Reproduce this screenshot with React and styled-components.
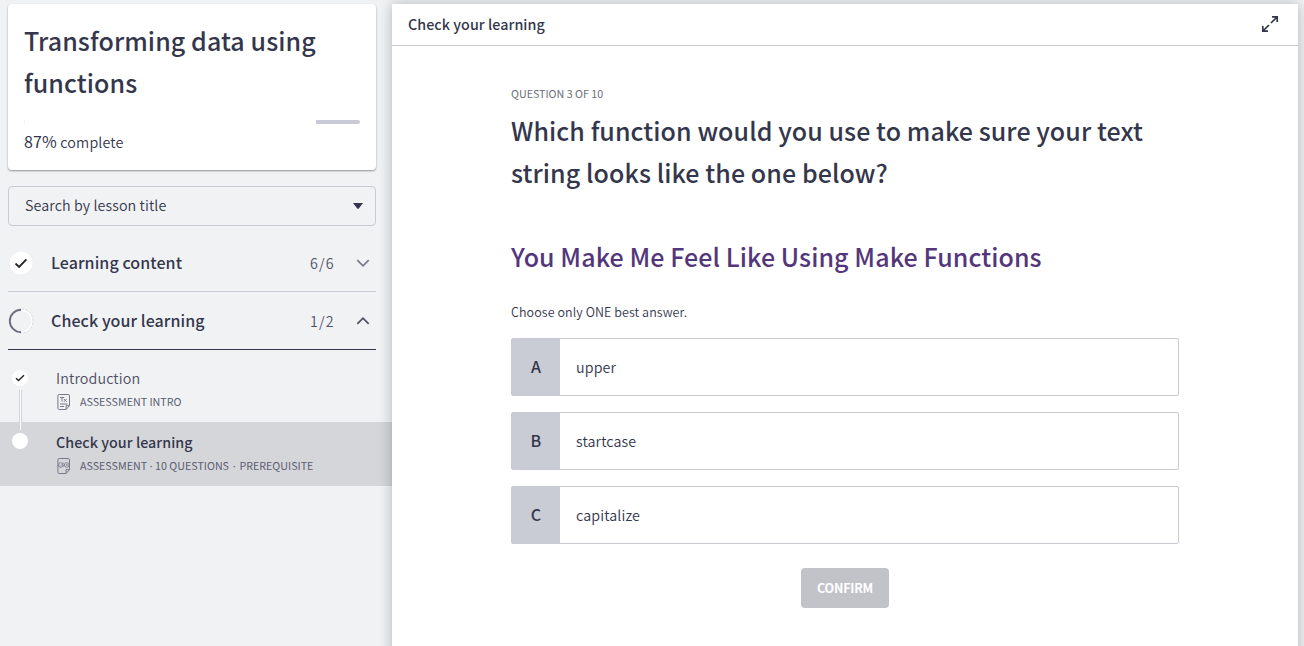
import React from "react";
import styled, { createGlobalStyle } from "styled-components";

const GlobalStyle = createGlobalStyle`
  * { box-sizing: border-box; }
  body {
    margin: 0;
    background: #f1f2f4;
    color: #34374c;
    font-family: "Noto Sans CJK SC", "Noto Sans", sans-serif;
    overflow: hidden;
  }
  h1, h2, h3, p { margin: 0; }
`;

const Page = styled.div`
  display: flex;
  height: 646px;
  background: #f1f2f4;
  overflow: hidden;
`;

const Sidebar = styled.aside`
  width: 392px;
  flex: none;
  padding-top: 4px;
`;

const CourseCard = styled.section`
  width: 368px;
  height: 166px;
  margin-left: 8px;
  padding: 15px 16px 0;
  border-radius: 4px;
  background: #fff;
  box-shadow: 0 1px 2px rgba(0, 0, 0, 0.4);
`;

const CourseTitle = styled.h1`
  font-size: 25px;
  font-weight: 500;
  line-height: 42px;
  letter-spacing: 0.09px;
`;

const ProgressTrack = styled.div`
  display: flex;
  justify-content: flex-end;
  height: 4px;
  margin-top: 17px;
  border-left: 1px solid #f4f4f6;
`;

const ProgressRest = styled.div`
  width: 44px;
  border-radius: 0 2px 2px 0;
  background: #cacbd6;
`;

const ProgressText = styled.p`
  margin-top: 5px;
  font-size: 14.3px;
  font-weight: 350;
  line-height: 24px;
  letter-spacing: 0.15px;
  color: #34374c;
`;

const Percent = styled.span`
  font-size: 16px;
  font-weight: 400;
`;

const SearchBox = styled.div`
  display: flex;
  align-items: center;
  justify-content: space-between;
  width: 368px;
  height: 40px;
  margin: 16px 0 8px 8px;
  padding: 0 12px 3px 16px;
  border: 1px solid #c9cad5;
  border-radius: 4px;
  font-size: 14.3px;
  font-weight: 350;
  letter-spacing: 0.09px;
  color: #34374c;
`;

const Section = styled.div`
  display: flex;
  align-items: center;
  width: 368px;
  height: 58px;
  margin-left: 8px;
  padding-right: 6px;
  border-bottom: 1px solid ${(p) => (p.$open ? "#34374c" : "#c9cad5")};
`;

const SectionTitle = styled.h2`
  flex: 1;
  margin-left: 17px;
  font-size: 16px;
  font-weight: 500;
  line-height: 27px;
  letter-spacing: 0.08px;
`;

const SectionCount = styled.span`
  width: 46px;
  font-size: 14.3px;
  font-weight: 350;
  letter-spacing: 1.1px;
  color: #4f5166;
`;

const Lessons = styled.div`
  display: flex;
  flex-direction: column;
  padding-top: 8px;
`;

const Lesson = styled.div`
  position: relative;
  display: flex;
  height: 64px;
  padding-left: 12px;
  background: ${(p) => (p.$current ? "#d5d6da" : "transparent")};
`;

const LessonDot = styled.div`
  display: flex;
  align-items: center;
  justify-content: center;
  flex: none;
  width: 16px;
  height: 16px;
  margin-top: ${(p) => (p.$current ? "11px" : "12px")};
  border-radius: 50%;
  background: #fff;
`;

const Connector = styled.div`
  position: absolute;
  left: 19px;
  top: 32px;
  z-index: 1;
  width: 3px;
  height: 40px;
  border: solid #d3d4d9;
  border-width: 0 1px;
  background: #fff;
`;

const LessonBody = styled.div`
  margin-left: 28px;
  padding-top: 8px;
`;

const LessonTitle = styled.h3`
  font-size: 14.3px;
  font-weight: ${(p) => (p.$current ? 500 : 350)};
  line-height: 24px;
  letter-spacing: ${(p) => (p.$current ? "0.04px" : "0.12px")};
  color: ${(p) => (p.$current ? "#34374c" : "#4c4f63")};
`;

const LessonMeta = styled.div`
  display: flex;
  align-items: center;
  gap: 8px;
  height: 24px;
  font-size: 10.7px;
  color: #5a5c70;
`;

const MetaText = styled.span`
  margin-top: -2px;
  white-space: pre;
`;

const Dot = styled.span`
  margin: 0 ${(p) => (p.$wide ? "1.4px" : "0.2px")};
  font-family: "Noto Sans", sans-serif;
  line-height: 1;
`;

const Panel = styled.main`
  position: relative;
  z-index: 2;
  width: 906px;
  height: 680px;
  margin-top: 4px;
  background: #fff;
  box-shadow: 0 0 13px rgba(0, 0, 0, 0.26);
`;

const PanelHeader = styled.header`
  display: flex;
  align-items: center;
  justify-content: space-between;
  height: 42px;
  padding: 0 19px 2px 16px;
  border-bottom: 1px solid #c9cad5;
`;

const PanelTitle = styled.h2`
  font-size: 14.3px;
  font-weight: 500;
  line-height: 24px;
  letter-spacing: 0.05px;
`;

const Question = styled.section`
  display: flex;
  flex-direction: column;
  width: 668px;
  margin: 39px auto 0 119px;
`;

const QuestionCount = styled.p`
  font-size: 10.7px;
  line-height: 18px;
  color: #6b6d7c;
`;

const QuestionTitle = styled.h1`
  margin-top: 6px;
  font-size: 25px;
  font-weight: 500;
  line-height: 42px;
  letter-spacing: 0.08px;
  white-space: nowrap;
`;

const Sample = styled(QuestionTitle)`
  margin-top: 42px;
  color: #53377a;
`;

const Hint = styled.p`
  margin-top: 25px;
  font-size: 12.5px;
  font-weight: 350;
  line-height: 20px;
  letter-spacing: 0.08px;
  color: #34374c;
`;

const Choices = styled.div`
  display: flex;
  flex-direction: column;
  gap: 16px;
  margin-top: 16px;
`;

const Choice = styled.div`
  display: flex;
  align-items: center;
  height: 58px;
  border: 1px solid #c9cad5;
  border-radius: 2px;
  font-size: 14.3px;
  font-weight: 350;
  letter-spacing: 0.12px;
  color: #34374c;
`;

const Letter = styled.div`
  display: flex;
  align-items: center;
  justify-content: center;
  width: 48px;
  height: 56px;
  margin-right: 16px;
  padding-bottom: 2px;
  background: #c9cbd5;
  font-size: 16px;
  font-weight: 500;
`;

const AnswerText = styled.span`
  padding-bottom: 2px;
`;

const ConfirmButton = styled.button`
  align-self: center;
  width: 88px;
  height: 40px;
  margin-top: 24px;
  padding: 0;
  border: 0;
  border-radius: 4px;
  background: #c2c3c9;
  color: #fff;
  font: 700 12.5px/20px "Noto Sans CJK SC", sans-serif;
  letter-spacing: -0.2px;
`;

const DoneIcon = () => (
  <svg width="26" height="26" viewBox="0 0 26 26">
    <circle cx="13" cy="13" r="12" fill="#fff" stroke="#e4e5e9" strokeWidth=".5" />
    <path d="M7.5 13.5l3.6 3.4 7.3-7.6" fill="none" stroke="#222" strokeWidth="1.8" />
  </svg>
);

const HalfIcon = () => (
  <svg width="26" height="26" viewBox="0 0 26 26">
    <path d="M13 1.7a11.3 11.3 0 0 1 0 22.6" fill="none" stroke="#fff" strokeWidth="1.8" />
    <path d="M13 1a12 12 0 0 1 0 24" fill="none" stroke="#c9cad0" strokeWidth=".7" strokeDasharray="3 1" />
    <path d="M13 1.8a11.2 11.2 0 0 0 0 22.4" fill="none" stroke="#6c6e80" strokeWidth="1.9" />
  </svg>
);

const Chevron = ({ up }) => (
  <svg width="14" height="14" viewBox="0 0 14 14" fill="none" stroke={up ? "#4c4f62" : "#77798a"} strokeWidth="1.7">
    <path d={up ? "M1.3 9.8L7 4.2l5.7 5.6" : "M1.3 4.2L7 9.8l5.7-5.6"} />
  </svg>
);

const CaretIcon = styled.svg`
  margin-top: 2px;
`;

const Caret = () => (
  <CaretIcon width="10" height="6" viewBox="0 0 10 6">
    <path d="M0 0h10L5.8 5.4Q5 6 4.2 5.4z" fill="#34374c" />
  </CaretIcon>
);

const PageOutline = ({ children }) => (
  <svg width="16" height="18" viewBox="0 0 16 18" fill="none" stroke="#77798a">
    <path d="M3.2 1.5h9a1.3 1.3 0 0 1 1.3 1.3v9.9l-3.4 3.8H3.2a1.3 1.3 0 0 1-1.3-1.3V2.8a1.3 1.3 0 0 1 1.3-1.3zM13.5 12.7h-3.4v3.8" />
    {children}
  </svg>
);

const TextPageIcon = () => (
  <PageOutline>
    <path d="M4 4.5h4.2M6 4.5v4M7.9 6l2.8 2.8M10.7 6L7.9 8.8M4 11h7.5M4 13.5h4" />
  </PageOutline>
);

const QuizPageIcon = () => (
  <PageOutline>
    <circle cx="4.7" cy="8" r="2.3" strokeWidth=".8" />
    <circle cx="10.7" cy="8" r="2.3" strokeWidth=".8" />
    <path d="M3.6 8l.9.9 3.6-3.3M6.8 10l2-3M9.9 7.2l1.7 1.6M11.6 7.2L9.9 8.8" strokeWidth=".8" />
  </PageOutline>
);

const ExpandIcon = () => (
  <svg width="18" height="18" viewBox="0 0 18 18" fill="none" stroke="#34374c" strokeWidth="1.7">
    <path d="M11 1.8h5.2V7M16 2l-6 6M7 16.2H1.8V11M2 16l6-6" />
  </svg>
);

const answers = ["upper", "startcase", "capitalize"];

export default function App() {
  return (
    <>
      <GlobalStyle />
      <Page>
        <Sidebar>
          <CourseCard>
            <CourseTitle>Transforming data using functions</CourseTitle>
            <ProgressTrack>
              <ProgressRest />
            </ProgressTrack>
            <ProgressText>
              <Percent>87%</Percent> complete
            </ProgressText>
          </CourseCard>
          <SearchBox>
            Search by lesson title
            <Caret />
          </SearchBox>
          <Section>
            <DoneIcon />
            <SectionTitle>Learning content</SectionTitle>
            <SectionCount>6/6</SectionCount>
            <Chevron />
          </Section>
          <Section $open>
            <HalfIcon />
            <SectionTitle>Check your learning</SectionTitle>
            <SectionCount>1/2</SectionCount>
            <Chevron up />
          </Section>
          <Lessons>
            <Lesson>
              <LessonDot>
                <svg width="10" height="8" viewBox="0 0 10 8" fill="none" stroke="#222" strokeWidth="1.4">
                  <path d="M1 4.2l2.5 2.3L9 1.3" />
                </svg>
              </LessonDot>
              <Connector />
              <LessonBody>
                <LessonTitle>Introduction</LessonTitle>
                <LessonMeta>
                  <TextPageIcon />
                  <MetaText>ASSESSMENT INTRO</MetaText>
                </LessonMeta>
              </LessonBody>
            </Lesson>
            <Lesson $current>
              <LessonDot $current />
              <LessonBody>
                <LessonTitle $current>Check your learning</LessonTitle>
                <LessonMeta>
                  <QuizPageIcon />
                  <MetaText>
                    ASSESSMENT <Dot>·</Dot> 10 QUESTIONS{" "}
                    <Dot $wide>·</Dot> PREREQUISITE
                  </MetaText>
                </LessonMeta>
              </LessonBody>
            </Lesson>
          </Lessons>
        </Sidebar>
        <Panel>
          <PanelHeader>
            <PanelTitle>Check your learning</PanelTitle>
            <ExpandIcon />
          </PanelHeader>
          <Question>
            <QuestionCount>QUESTION 3 OF 10</QuestionCount>
            <QuestionTitle>
              Which function would you use to make sure your text
              <br />
              string looks like the one below?
            </QuestionTitle>
            <Sample>You Make Me Feel Like Using Make Functions</Sample>
            <Hint>Choose only ONE best answer.</Hint>
            <Choices>
              {answers.map((answer, i) => (
                <Choice key={answer}>
                  <Letter>{"ABC"[i]}</Letter>
                  <AnswerText>{answer}</AnswerText>
                </Choice>
              ))}
            </Choices>
            <ConfirmButton>CONFIRM</ConfirmButton>
          </Question>
        </Panel>
      </Page>
    </>
  );
}
